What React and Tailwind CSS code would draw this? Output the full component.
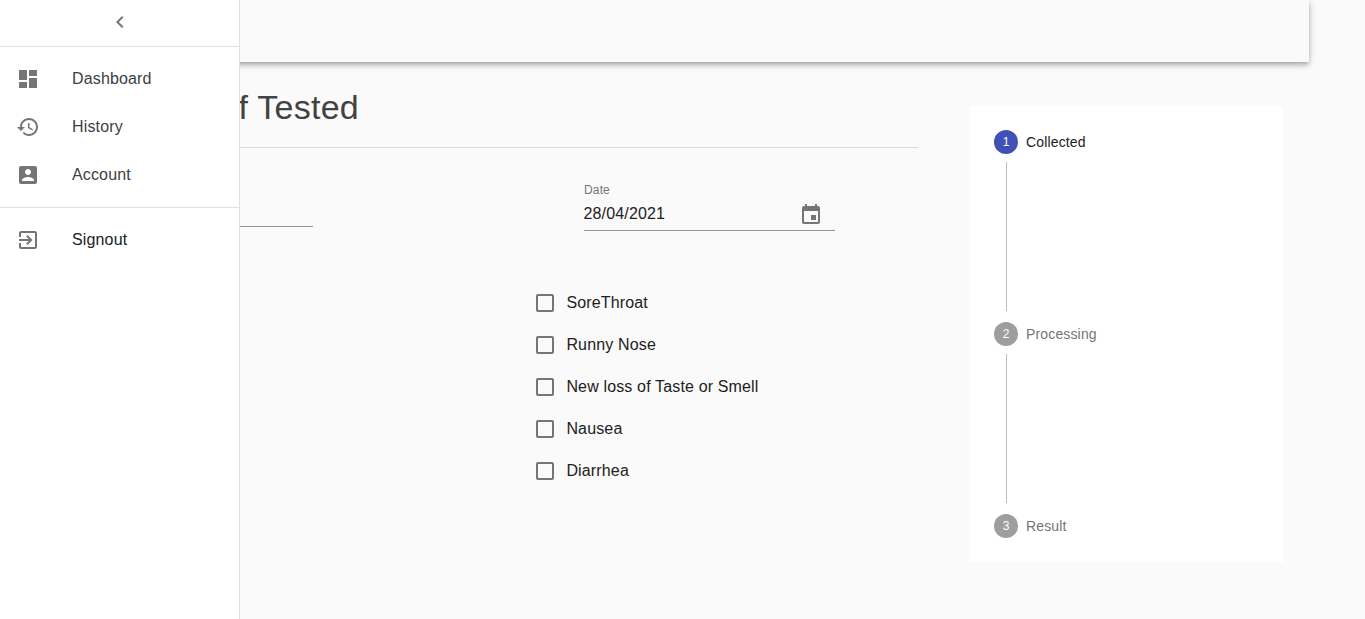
const symptoms = ['SoreThroat', 'Runny Nose', 'New loss of Taste or Smell', 'Nausea', 'Diarrhea'];

const icons = {
  chevron: 'M15.41 7.41L14 6l-6 6 6 6 1.41-1.41L10.83 12z',
  dashboard: 'M3 13h8V3H3v10zm0 8h8v-6H3v6zm10 0h8V11h-8v10zm0-18v6h8V3h-8z',
  history:
    'M13 3c-4.97 0-9 4.03-9 9H1l3.89 3.89.07.14L9 12H6c0-3.87 3.13-7 7-7s7 3.13 7 7-3.13 7-7 7c-1.93 0-3.68-.79-4.94-2.06l-1.42 1.42C8.27 19.99 10.51 21 13 21c4.97 0 9-4.03 9-9s-4.03-9-9-9zm-1 5v5l4.28 2.54.72-1.21-3.5-2.08V8H12z',
  account:
    'M3 5v14c0 1.1.89 2 2 2h14c1.1 0 2-.9 2-2V5c0-1.1-.9-2-2-2H5c-1.11 0-2 .9-2 2zm12 4c0 1.66-1.34 3-3 3s-3-1.34-3-3 1.34-3 3-3 3 1.34 3 3zm-9 8c0-2 4-3.1 6-3.1s6 1.1 6 3.1v1H6v-1z',
  signout:
    'M10.09 15.59L11.5 17l5-5-5-5-1.41 1.41L12.67 11H3v2h9.67l-2.58 2.59zM19 3H5c-1.11 0-2 .9-2 2v4h2V5h14v14H5v-4H3v4c0 1.1.89 2 2 2h14c1.1 0 2-.9 2-2V5c0-1.1-.9-2-2-2z',
  calendar:
    'M17 12h-5v5h5v-5zM16 1v2H8V1H6v2H5c-1.11 0-1.99.9-1.99 2L3 19c0 1.1.89 2 2 2h14c1.1 0 2-.9 2-2V5c0-1.1-.9-2-2-2h-1V1h-2zm3 18H5V8h14v11z',
  checkbox:
    'M19 5v14H5V5h14m0-2H5c-1.1 0-2 .9-2 2v14c0 1.1.9 2 2 2h14c1.1 0 2-.9 2-2V5c0-1.1-.9-2-2-2z',
};

function Icon({ name }) {
  return (
    <svg viewBox="0 0 24 24" className="size-6 shrink-0 fill-[#757575]" aria-hidden="true">
      <path d={icons[name]} />
    </svg>
  );
}

function NavItem({ icon, label, color }) {
  return (
    <li className={`flex h-12 items-center gap-8 px-4 ${color}`}>
      <Icon name={icon} />
      <span>{label}</span>
    </li>
  );
}

function Sidebar() {
  return (
    <aside className="z-10 w-60 shrink-0 border-r border-[#e0e0e0] bg-white">
      <button className="flex h-[46px] w-full items-center justify-center pb-0.5">
        <Icon name="chevron" />
      </button>
      <ul className="border-t border-[#e0e0e0] py-2">
        <NavItem icon="dashboard" label="Dashboard" color="text-[#404040]" />
        <NavItem icon="history" label="History" color="text-[#404040]" />
        <NavItem icon="account" label="Account" color="text-[#404040]" />
      </ul>
      <ul className="border-t border-[#e0e0e0] py-2">
        <NavItem icon="signout" label="Signout" color="text-[#212121]" />
      </ul>
    </aside>
  );
}

function Step({ number, label, active }) {
  return (
    <div className="flex h-6 items-center gap-2 text-sm tracking-[0.01071em]">
      <span
        className={`flex size-6 items-center justify-center rounded-full text-xs tracking-normal text-white ${
          active ? 'bg-[#3f51b5]' : 'bg-[#9e9e9e]'
        }`}
      >
        {number}
      </span>
      <span className={active ? 'text-[#212121]' : 'text-[#757575]'}>{label}</span>
    </div>
  );
}

function Connector() {
  return <div className="mt-2 mb-[11px] ml-3 h-[149px] w-px bg-[#bdbdbd]" />;
}

export default function App() {
  return (
    <div className="flex h-[619px] w-full overflow-hidden bg-[#fafafa] font-['Liberation_Sans',Arial,sans-serif] text-base tracking-[0.00938em] text-[#212121]">
      <Sidebar />
      <main className="min-w-0 flex-1">
        <header className="mr-14 -ml-6 h-[62px] bg-[#fafafa] shadow-[0px_2px_4px_-1px_rgba(0,0,0,0.2),0px_4px_5px_0px_rgba(0,0,0,0.14),0px_1px_10px_0px_rgba(0,0,0,0.12)]" />
        <div className="flex">
          <section className="w-[678px] shrink-0">
            <h1 className="-ml-[1.5px] h-[85px] pt-6 text-[34px] leading-[42px] tracking-[0.00735em] text-[#424242]">
              f Tested
            </h1>
            <div className="h-px bg-[#dcdcdc]" />
            <div className="flex">
              <div className="h-[79px] w-[73px] border-b border-[#949494]" />
              <div className="mt-[34px] ml-[271px] h-[49px] w-[251px] border-b border-[#949494]">
                <label className="block h-4 text-xs leading-4 text-[#757575]">Date</label>
                <div className="-ml-[0.5px] flex h-[34px] items-center justify-between pr-3">
                  <span className="pb-0.5">28/04/2021</span>
                  <Icon name="calendar" />
                </div>
              </div>
            </div>
            <ul className="mt-[51px] ml-[293px]">
              {symptoms.map((symptom) => (
                <li key={symptom} className="flex h-[42px] items-center gap-[9.4px]">
                  <Icon name="checkbox" />
                  <span>{symptom}</span>
                </li>
              ))}
            </ul>
          </section>
          <section className="mt-11 ml-[52px] h-[456px] w-[313px] bg-white p-6">
            <Step number={1} label="Collected" active />
            <Connector />
            <Step number={2} label="Processing" />
            <Connector />
            <Step number={3} label="Result" />
          </section>
        </div>
      </main>
    </div>
  );
}
